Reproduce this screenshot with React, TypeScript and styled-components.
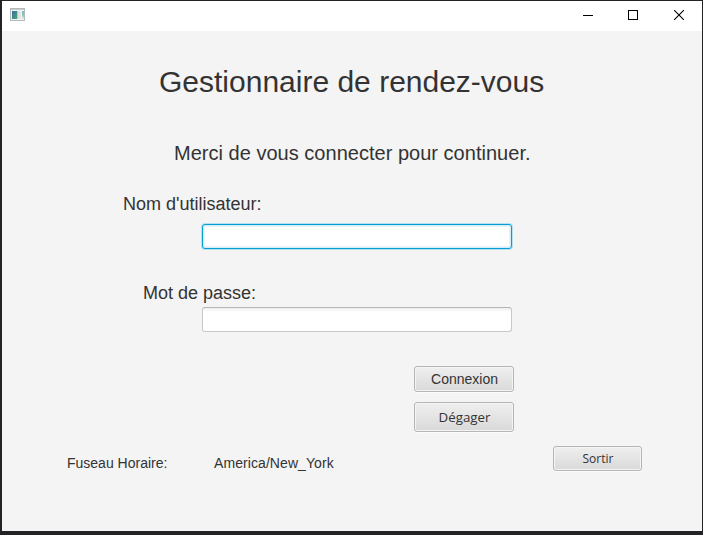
import React from 'react';
import styled, { createGlobalStyle } from 'styled-components';

const GlobalStyle = createGlobalStyle`
  *, *::before, *::after { box-sizing: border-box; }
  html, body { margin: 0; padding: 0; overflow: hidden; }
`;

const Window = styled.div`
  display: flex;
  flex-direction: column;
  width: 703px;
  height: 535px;
  border: solid #232224;
  border-width: 1px 1px 4px 2px;
  background: #f4f4f4;
  color: #333;
  font-family: 'Liberation Sans', Arial, sans-serif;
`;

const TitleBar = styled.header`
  display: flex;
  align-items: center;
  justify-content: space-between;
  flex: none;
  height: 30px;
  padding-left: 8px;
  background: #fff;
`;

const AppIcon = styled.svg`
  display: block;
  margin-bottom: 2px;
`;

const Controls = styled.div`
  display: flex;
  align-self: stretch;
`;

const ControlButton = styled.button<{ $width: number }>`
  display: flex;
  justify-content: center;
  width: ${(p) => p.$width}px;
  height: 29px;
  padding: 9px 0 0;
  border: 0;
  background: transparent;
`;

const Form = styled.form`
  display: flex;
  flex-direction: column;
  padding-top: 34px;
`;

const Title = styled.h1`
  margin: 0 0 43px 157px;
  font-size: 30px;
  font-weight: 400;
  line-height: 34px;
  white-space: nowrap;
`;

const Subtitle = styled.p`
  margin: 0 0 30px 172px;
  font-size: 20px;
  line-height: 22px;
  letter-spacing: 0.02px;
  white-space: nowrap;
`;

const FieldLabel = styled.label<{ $indent: number; $gap: number }>`
  margin: 0 0 ${(p) => p.$gap}px ${(p) => p.$indent}px;
  font-size: 18px;
  line-height: 20px;
  white-space: nowrap;
`;

const TextField = styled.input`
  width: 310px;
  height: 25px;
  margin: 0 0 34px 200px;
  padding: 0 7px;
  border: 1px solid #c8c8c8;
  border-top-color: #b5b5b5;
  border-radius: 3px;
  outline: none;
  background: linear-gradient(#ededed, #fff 4px);
  font: 14px 'Liberation Sans', Arial, sans-serif;
  caret-color: transparent;

  &:focus {
    border-color: #039ed3;
    background: #fff;
    box-shadow: 0 0 0 1px #b9e0ee, inset 0 0 0 1px #d5edf6, inset 0 0 0 2px #e9f4f8;
  }
`;

const Actions = styled.div`
  display: flex;
  flex-direction: column;
  gap: 10px;
  width: 100px;
  margin-left: 412px;
`;

const Button = styled.button<{ $width: number; $height: number; $size: number; $humanist?: boolean }>`
  width: ${(p) => p.$width}px;
  height: ${(p) => p.$height}px;
  padding: 0 0 0 1px;
  border: 1px solid #b5b5b5;
  border-radius: 3px;
  background: linear-gradient(#efefef, #d9d9d9);
  box-shadow: inset 0 0 0 1px #f4f4f4, 0 1px 0 #fbfbfb;
  color: #333;
  font-family: ${(p) => (p.$humanist ? "'Open Sans', 'Noto Sans', sans-serif" : "'Liberation Sans', Arial, sans-serif")};
  font-size: ${(p) => p.$size}px;
  line-height: 18px;
`;

const Footer = styled.footer`
  display: flex;
  align-items: flex-start;
  margin-top: 14px;
  padding: 0 59px 0 65px;
`;

const FooterText = styled.span<{ $width: number; $tracking?: number }>`
  width: ${(p) => p.$width}px;
  margin-top: 9px;
  font-size: 14px;
  line-height: 16px;
  letter-spacing: ${(p) => p.$tracking ?? 0}px;
  white-space: nowrap;
`;

export default function App() {
  return (
    <>
      <GlobalStyle />
      <Window>
        <TitleBar>
          <AppIcon width="16" height="14" viewBox="0 0 16 14" shapeRendering="crispEdges">
            <defs>
              <linearGradient id="pane" x1="0" y1="0" x2="1" y2="1">
                <stop offset="0" stopColor="#386ca0" />
                <stop offset="1" stopColor="#4da778" />
              </linearGradient>
              <linearGradient id="side" x1="0" y1="0" x2="0" y2="1">
                <stop offset="0" stopColor="#83b5e8" />
                <stop offset="0.5" stopColor="#8fc6a8" />
                <stop offset="1" stopColor="#e4eee8" />
              </linearGradient>
            </defs>
            <rect x="0.5" y="0.5" width="14" height="12" fill="#f3f5f5" stroke="#b4babc" />
            <path d="M1 1.5H14" stroke="#c5cacc" />
            <rect x="2" y="3" width="5" height="8" fill="url(#pane)" />
            <rect x="7" y="3" width="1" height="8" fill="#b9c8c8" />
            <rect x="8" y="3" width="3" height="8" fill="#e4e4e4" />
            <rect x="12" y="3" width="2" height="8" fill="url(#side)" />
          </AppIcon>
          <Controls>
            <ControlButton type="button" $width={44} aria-label="Réduire">
              <svg width="10" height="10" viewBox="0 0 10 10">
                <path d="M0 5.5H10" stroke="#000" />
              </svg>
            </ControlButton>
            <ControlButton type="button" $width={46} aria-label="Agrandir">
              <svg width="10" height="10" viewBox="0 0 10 10">
                <rect x="0.5" y="0.5" width="9" height="9" fill="none" stroke="#000" />
              </svg>
            </ControlButton>
            <ControlButton type="button" $width={46} aria-label="Fermer">
              <svg width="10" height="10" viewBox="0 0 10 10">
                <path d="M0 0L10 10M10 0L0 10" stroke="#000" strokeWidth="1.1" />
              </svg>
            </ControlButton>
          </Controls>
        </TitleBar>
        <Form onSubmit={(e) => e.preventDefault()}>
          <Title>Gestionnaire de rendez-vous</Title>
          <Subtitle>Merci de vous connecter pour continuer.</Subtitle>
          <FieldLabel htmlFor="user" $indent={121} $gap={10}>Nom d'utilisateur:</FieldLabel>
          <TextField id="user" autoFocus />
          <FieldLabel htmlFor="password" $indent={141} $gap={4}>Mot de passe:</FieldLabel>
          <TextField id="password" type="password" />
          <Actions>
            <Button $width={100} $height={26} $size={14}>Connexion</Button>
            <Button type="button" $width={100} $height={30} $size={13.3} $humanist>Dégager</Button>
          </Actions>
          <Footer>
            <FooterText $width={147}>Fuseau Horaire:</FooterText>
            <FooterText $width={339} $tracking={0.08}>America/New_York</FooterText>
            <Button type="button" $width={89} $height={25} $size={12} $humanist>Sortir</Button>
          </Footer>
        </Form>
      </Window>
    </>
  );
}
